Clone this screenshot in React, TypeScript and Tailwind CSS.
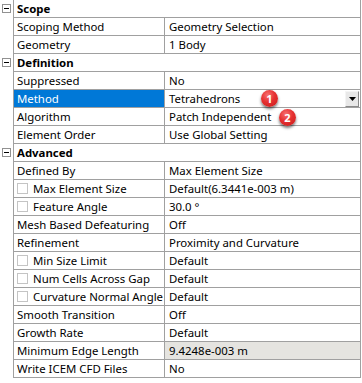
import React from "react";

type Row =
  | { kind: "header"; label: string }
  | {
      kind: "prop";
      name: string;
      value: string;
      checkbox?: boolean;
      selected?: boolean;
      dropdown?: boolean;
      gray?: boolean;
    };

const rows: Row[] = [
  { kind: "header", label: "Scope" },
  { kind: "prop", name: "Scoping Method", value: "Geometry Selection" },
  { kind: "prop", name: "Geometry", value: "1 Body" },
  { kind: "header", label: "Definition" },
  { kind: "prop", name: "Suppressed", value: "No" },
  { kind: "prop", name: "Method", value: "Tetrahedrons", selected: true, dropdown: true },
  { kind: "prop", name: "Algorithm", value: "Patch Independent" },
  { kind: "prop", name: "Element Order", value: "Use Global Setting" },
  { kind: "header", label: "Advanced" },
  { kind: "prop", name: "Defined By", value: "Max Element Size" },
  { kind: "prop", name: "Max Element Size", value: "Default(6.3441e-003 m)", checkbox: true },
  { kind: "prop", name: "Feature Angle", value: "30.0 °", checkbox: true },
  { kind: "prop", name: "Mesh Based Defeaturing", value: "Off" },
  { kind: "prop", name: "Refinement", value: "Proximity and Curvature" },
  { kind: "prop", name: "Min Size Limit", value: "Default", checkbox: true },
  { kind: "prop", name: "Num Cells Across Gap", value: "Default", checkbox: true },
  { kind: "prop", name: "Curvature Normal Angle", value: "Default", checkbox: true },
  { kind: "prop", name: "Smooth Transition", value: "Off" },
  { kind: "prop", name: "Growth Rate", value: "Default" },
  { kind: "prop", name: "Minimum Edge Length", value: "9.4248e-003 m", gray: true },
  { kind: "prop", name: "Write ICEM CFD Files", value: "No" },
];

function MinusBox() {
  return (
    <div className="absolute left-[2px] top-[4px] w-[9px] h-[9px] border border-[#919191] bg-white flex items-center justify-center">
      <div className="w-[5px] h-[1px] bg-black" />
    </div>
  );
}

function Badge({ n, className }: { n: string; className: string }) {
  return (
    <div
      className={
        "absolute w-[17px] h-[17px] rounded-full flex items-center justify-center text-white font-bold text-[11px] leading-none shadow-[0_2px_3px_rgba(0,0,0,0.55)] bg-[radial-gradient(circle_at_40%_30%,#f77070_0%,#e53030_45%,#c81a1a_100%)] " +
        className
      }
    >
      {n}
    </div>
  );
}

export default function App() {
  return (
    <div
      className="relative w-[362px] h-[383px] bg-white text-[11.4px] text-black overflow-hidden"
      style={{ fontFamily: '"Segoe UI", "Noto Sans", sans-serif' }}
    >
      {rows.map((r, i) => (
        <div key={i} className="flex h-[18px]">
          <div className="relative w-[13px] shrink-0">{r.kind === "header" && <MinusBox />}</div>
          <div className="w-[348px] shrink-0 flex border-l border-r border-b border-[#a0a0a0]">
            {r.kind === "header" ? (
              <div className="pl-[3px] font-bold leading-[17px]">{r.label}</div>
            ) : (
              <>
                <div
                  className={
                    "w-[151px] shrink-0 flex items-center border-r border-[#a0a0a0] pl-[3px] leading-[17px] whitespace-nowrap overflow-hidden " +
                    (r.selected ? "bg-[#0078d7] text-white" : "")
                  }
                >
                  {r.checkbox && (
                    <div className="w-[11px] h-[11px] border border-[#c4c4c4] bg-white mr-[5px] shrink-0" />
                  )}
                  <span>{r.name}</span>
                </div>
                <div
                  className={
                    "relative flex-1 pl-[4px] leading-[17px] whitespace-nowrap " + (r.gray ? "bg-[#e5e4e0]" : "")
                  }
                >
                  {r.value}
                  {r.dropdown && (
                    <div className="absolute right-[1px] top-[1px] w-[14px] h-[16px] bg-[#e8e8e8] border border-t-[#f4f4f4] border-l-[#f4f4f4] border-r-[#8a8a8a] border-b-[#8a8a8a] flex items-center justify-center">
                      <svg width="7" height="4" viewBox="0 0 7 4">
                        <path d="M0 0 L7 0 L3.5 4 Z" fill="#000" />
                      </svg>
                    </div>
                  )}
                </div>
              </>
            )}
          </div>
        </div>
      ))}
      <Badge n="1" className="left-[261px] top-[90px]" />
      <Badge n="2" className="left-[279px] top-[109px]" />
    </div>
  );
}
